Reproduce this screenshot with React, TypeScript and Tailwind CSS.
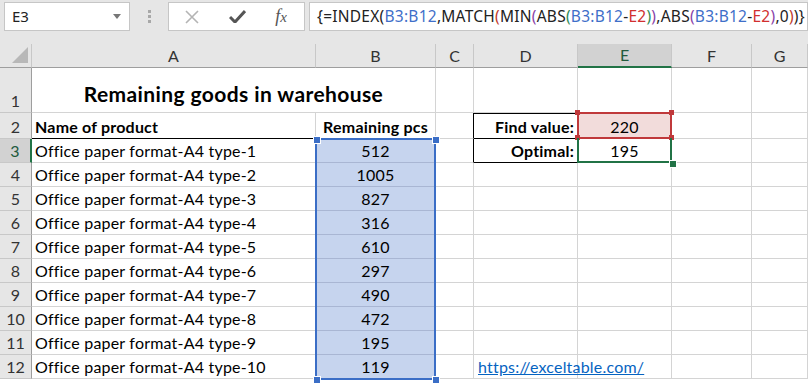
const products = [
  { name: 'Office paper format-A4 type-1', qty: 512 },
  { name: 'Office paper format-A4 type-2', qty: 1005 },
  { name: 'Office paper format-A4 type-3', qty: 827 },
  { name: 'Office paper format-A4 type-4', qty: 316 },
  { name: 'Office paper format-A4 type-5', qty: 610 },
  { name: 'Office paper format-A4 type-6', qty: 297 },
  { name: 'Office paper format-A4 type-7', qty: 490 },
  { name: 'Office paper format-A4 type-8', qty: 472 },
  { name: 'Office paper format-A4 type-9', qty: 195 },
  { name: 'Office paper format-A4 type-10', qty: 119 },
];

const colHeads = ['A', 'B', 'C', 'D', 'E', 'F', 'G'];

function Toolbar() {
  return (
    <div className="flex h-[44px] items-start gap-0 bg-[#e6e6e6] pt-[2px] font-['Noto_Sans',sans-serif]">
      <div className="ml-[4px] flex h-[29px] w-[126px] items-center justify-between border border-[#c6c6c6] bg-white pl-[7px] pr-[8px] text-[15px] text-[#222]">
        <span>E3</span>
        <svg width="8" height="5" viewBox="0 0 8 5">
          <path d="M0 0h8L4 5z" fill="#777" />
        </svg>
      </div>
      <div className="flex h-[29px] w-[38px] flex-col items-center justify-center gap-[2px]">
        <span className="h-[3px] w-[3px] bg-[#a8a8a8]" />
        <span className="h-[3px] w-[3px] bg-[#a8a8a8]" />
        <span className="h-[3px] w-[3px] bg-[#a8a8a8]" />
      </div>
      <div className="flex h-[29px] w-[137px] items-center border border-[#c6c6c6] bg-white">
        <div className="flex w-[46px] justify-center">
          <svg width="14" height="14" viewBox="0 0 14 14">
            <path d="M1 1l12 12M13 1L1 13" stroke="#b4b4b4" strokeWidth="1.6" />
          </svg>
        </div>
        <div className="flex w-[44px] justify-center">
          <svg width="17" height="13" viewBox="0 0 17 13">
            <path d="M1 7l5 5L16 1" stroke="#555" strokeWidth="3" fill="none" />
          </svg>
        </div>
        <div className="flex w-[44px] justify-center font-['Liberation_Serif',serif] text-[18px] italic text-[#555]">
          <span>f<span className="text-[15px]">x</span></span>
        </div>
      </div>
      <div className="ml-[4px] flex h-[29px] flex-1 items-center border border-[#c6c6c6] bg-white pl-[7px] text-[15.5px] tracking-[0.25px] text-[#222]">
        <span className="whitespace-nowrap">
          {'{=INDEX('}
          <span className="text-[#3f6fc9]">B3:B12</span>
          {',MATCH'}
          <span className="text-[#c0392b]">(</span>
          {'MIN'}
          <span className="text-[#8a3fa8]">(</span>
          {'ABS'}
          <span className="text-[#2e8b57]">(</span>
          <span className="text-[#3f6fc9]">B3:B12</span>-
          <span className="text-[#d12f2f]">E2</span>
          <span className="text-[#2e8b57]">)</span>
          <span className="text-[#8a3fa8]">)</span>
          {',ABS'}
          <span className="text-[#8a3fa8]">(</span>
          <span className="text-[#3f6fc9]">B3:B12</span>-
          <span className="text-[#d12f2f]">E2</span>
          <span className="text-[#8a3fa8]">)</span>
          {',0'}
          <span className="text-[#c0392b]">)</span>
          {')}'}
        </span>
      </div>
    </div>
  );
}

const cell = 'flex items-end border-b border-r border-[#d4d4d4] pb-[1px] text-[16px] tracking-[0.2px] leading-[20px] text-black whitespace-nowrap';
const rowHead = 'flex items-end justify-center border-b border-r border-b-[#c8c8c8] border-r-[#9e9e9e] bg-[#e6e6e6] pb-[1px] text-[16px] leading-[20px] text-[#333]';

export default function App() {
  return (
    <div className="h-[385px] w-[808px] overflow-hidden bg-white font-['Lato',sans-serif]">
      <Toolbar />
      <div className="relative grid grid-cols-[32px_284px_120px_38px_104px_94px_80px_56px] grid-rows-[24px_45px_26px_repeat(11,24px)]">
        {/* column headers */}
        <div className="relative border-b border-r border-[#9e9e9e] border-r-[#c8c8c8] bg-[#e6e6e6]">
          <svg className="absolute bottom-[4px] right-[3px]" width="16" height="16" viewBox="0 0 16 16">
            <path d="M16 0V16H0z" fill="#b8b8b8" />
          </svg>
        </div>
        {colHeads.map((c) =>
          c === 'E' ? (
            <div key={c} className="flex items-center justify-center border-b-[2px] border-r border-b-[#217346] border-r-[#c8c8c8] bg-[#d2d2d2] text-[16px] text-[#215a3c]">
              {c}
            </div>
          ) : (
            <div key={c} className="flex items-center justify-center border-b border-r border-b-[#9e9e9e] border-r-[#c8c8c8] bg-[#e6e6e6] text-[16px] text-[#333]">
              {c}
            </div>
          ),
        )}

        {/* row 1 */}
        <div className={rowHead}>1</div>
        <div className={`${cell} col-span-2 justify-center pb-[8px] text-[21px] tracking-[0.4px] font-bold`}>
          Remaining goods in warehouse
        </div>
        <div className={cell} />
        <div className={cell} />
        <div className={cell} />
        <div className={cell} />
        <div className={cell} />

        {/* row 2 */}
        <div className={rowHead}>2</div>
        <div className={`${cell} border-b-black pl-[3px] font-bold`}>Name of product</div>
        <div className={`${cell} justify-center border-b-black font-bold`}>Remaining pcs</div>
        <div className={`${cell} border-r-black`} />
        <div className={`${cell} justify-end border-b-black border-t border-t-black pr-[3px] font-bold`}>Find value:</div>
        <div className={`${cell} justify-center bg-[#f2dcdb]`}>220</div>
        <div className={cell} />
        <div className={cell} />

        {/* rows 3..12 */}
        {products.map((p, i) => {
          const r = i + 3;
          return [
            <div
              key={`h${r}`}
              className={
                r === 3
                  ? 'flex items-end justify-center border-b border-r-[2px] border-b-[#c8c8c8] border-r-[#217346] bg-[#d2d2d2] pb-[1px] text-[16px] leading-[20px] text-[#215a3c]'
                  : rowHead
              }
            >
              {r}
            </div>,
            <div key={`a${r}`} className={`${cell} pl-[3px]`}>{p.name}</div>,
            <div key={`b${r}`} className={`${cell} justify-center border-b-[#a9b6d3] bg-[#c6d4ee]`}>{p.qty}</div>,
            <div key={`c${r}`} className={r === 3 ? `${cell} border-r-black` : cell} />,
            r === 3 ? (
              <div key={`d${r}`} className={`${cell} justify-end border-b-black pr-[3px] font-bold`}>Optimal:</div>
            ) : r === 12 ? (
              <div key={`d${r}`} className={`${cell} overflow-visible pl-[4px]`}>
                <span className="text-[#0563c1] underline">https://exceltable.com/</span>
              </div>
            ) : (
              <div key={`d${r}`} className={cell} />
            ),
            <div key={`e${r}`} className={`${cell} justify-center`}>{r === 3 ? 195 : ''}</div>,
            r === 12 ? <div key={`f${r}`} className="border-b border-r border-[#d4d4d4]" /> : <div key={`f${r}`} className={cell} />,
            <div key={`g${r}`} className={cell} />,
          ];
        })}

        {/* selection B3:B12 */}
        <div className="pointer-events-none absolute left-[315px] top-[94px] h-[242px] w-[121px] border-[2px] border-[#3b6ec6]" />
        {[
          'left-[313px] top-[92px]',
          'left-[432px] top-[92px]',
          'left-[313px] top-[332px]',
          'left-[432px] top-[332px]',
        ].map((pos) => (
          <div key={pos} className={`absolute ${pos} h-[6px] w-[6px] border border-white bg-[#3b6ec6] box-content`} />
        ))}

        {/* reference E2 */}
        <div className="pointer-events-none absolute left-[577px] top-[68px] h-[27px] w-[95px] border-[2px] border-[#c0393b]" />
        {[
          'left-[575px] top-[66px]',
          'left-[669px] top-[66px]',
          'left-[575px] top-[91px]',
          'left-[669px] top-[91px]',
        ].map((pos) => (
          <div key={pos} className={`absolute ${pos} h-[5px] w-[5px] bg-[#c0393b]`} />
        ))}

        {/* active cell E3 */}
        <div className="pointer-events-none absolute left-[577px] top-[94px] h-[25px] w-[95px] border-[2px] border-t-0 border-[#217346]" />
        <div className="absolute left-[669px] top-[116px] h-[6px] w-[6px] border border-white bg-[#217346] box-content" />
      </div>
    </div>
  );
}
